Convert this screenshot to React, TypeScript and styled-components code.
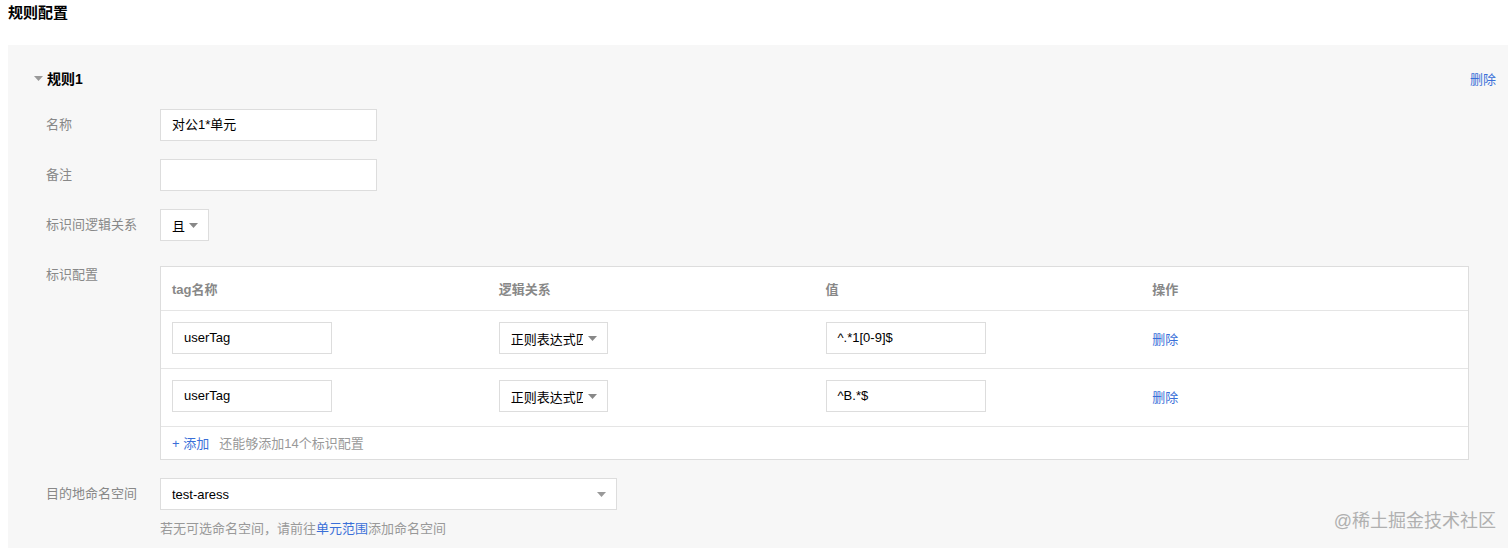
import React from 'react';
import styled, { createGlobalStyle } from 'styled-components';

const blue = '#3a6fd8';
const font = '"Liberation Sans", "Noto Sans CJK SC", sans-serif';

const GlobalStyle = createGlobalStyle`
    html, body {
        margin: 0;
        padding: 0;
        background: #ffffff;
        font-family: ${font};
        font-size: 13px;
        color: #333;
    }
`;

type TagRow = Readonly<{
    name: string;
    relation: string;
    value: string;
}>;

const rows: ReadonlyArray<TagRow> = [
    { name: 'userTag', relation: '正则表达式匹配', value: '^.*1[0-9]$' },
    { name: 'userTag', relation: '正则表达式匹配', value: '^B.*$' },
];

const Caret = ({ color = '#888' }: Readonly<{ color?: string }>) => (
    <svg width="9" height="5" viewBox="0 0 9 5">
        <path d="M0 0 L9 0 L4.5 5 Z" fill={color} />
    </svg>
);

const App = () => (
    <Page>
        <GlobalStyle />
        <PageTitle>规则配置</PageTitle>
        <Panel>
            <RuleHeader>
                <RuleTitle>
                    <Caret color="#999" />
                    规则1
                </RuleTitle>
                <LinkText>删除</LinkText>
            </RuleHeader>
            <Form>
                <FormRow>
                    <Label>名称</Label>
                    <TextInput width={217}>对公1*单元</TextInput>
                </FormRow>
                <FormRow>
                    <Label>备注</Label>
                    <TextInput width={217} />
                </FormRow>
                <FormRow gapAfter={25}>
                    <Label>标识间逻辑关系</Label>
                    <Select width={49}>
                        <SelectText>且</SelectText>
                        <Caret />
                    </Select>
                </FormRow>
                <FormRow>
                    <Label compact>标识配置</Label>
                    <Table>
                        <HeadRow>
                            <Cell>tag名称</Cell>
                            <Cell>逻辑关系</Cell>
                            <Cell>值</Cell>
                            <Cell>操作</Cell>
                        </HeadRow>
                        {rows.map((row, index) => (
                            <BodyRow key={index}>
                                <Cell>
                                    <TextInput width={160}>{row.name}</TextInput>
                                </Cell>
                                <Cell>
                                    <Select width={109}>
                                        <SelectText clip={72}>{row.relation}</SelectText>
                                        <Caret />
                                    </Select>
                                </Cell>
                                <Cell>
                                    <TextInput width={160}>{row.value}</TextInput>
                                </Cell>
                                <Cell>
                                    <LinkText>删除</LinkText>
                                </Cell>
                            </BodyRow>
                        ))}
                        <AddRow>
                            <LinkText>+ 添加</LinkText>
                            <Muted>还能够添加14个标识配置</Muted>
                        </AddRow>
                    </Table>
                </FormRow>
                <FormRow>
                    <Label>目的地命名空间</Label>
                    <Field>
                        <Select width={457}>
                            <SelectText>test-aress</SelectText>
                            <Caret color="#999" />
                        </Select>
                        <Hint>
                            若无可选命名空间，请前往<LinkText>单元范围</LinkText>添加命名空间
                        </Hint>
                    </Field>
                </FormRow>
            </Form>
            <Watermark>@稀土掘金技术社区</Watermark>
        </Panel>
    </Page>
);

const Page = styled.div`
    height: 548px;
    overflow: hidden;
    padding: 0 4px 0 8px;
    box-sizing: border-box;
`;

const PageTitle = styled.h1`
    margin: 0;
    padding-top: 4px;
    height: 45px;
    box-sizing: border-box;
    font-size: 15px;
    line-height: 18px;
    font-weight: bold;
    color: #000;
`;

const Panel = styled.div`
    position: relative;
    background: #f7f7f7;
    padding: 22px 12px 0 26px;
    height: 503px;
    box-sizing: border-box;
`;

const RuleHeader = styled.div`
    display: flex;
    align-items: center;
    justify-content: space-between;
    height: 22px;
    margin-bottom: 20px;
`;

const RuleTitle = styled.div`
    display: flex;
    align-items: center;
    gap: 4px;
    font-size: 14px;
    font-weight: bold;
    color: #000;
`;

const LinkText = styled.span`
    color: ${blue};
    cursor: pointer;
`;

const Form = styled.div`
    display: flex;
    flex-direction: column;
    padding-left: 12px;
`;

const FormRow = styled.div<{ gapAfter?: number }>`
    display: flex;
    align-items: flex-start;
    margin-bottom: ${({ gapAfter }) => gapAfter ?? 18}px;
`;

const Label = styled.div<{ compact?: boolean }>`
    width: 114px;
    flex-shrink: 0;
    color: #888;
    line-height: ${({ compact }) => (compact ? '18px' : '32px')};
`;

const TextInput = styled.div<{ width: number }>`
    width: ${({ width }) => width}px;
    height: 32px;
    box-sizing: border-box;
    border: 1px solid #dddddd;
    background: #fff;
    padding: 0 11px;
    line-height: 30px;
    color: #000;
`;

const Select = styled.div<{ width: number }>`
    width: ${({ width }) => width}px;
    height: 32px;
    box-sizing: border-box;
    border: 1px solid #dddddd;
    background: #fff;
    padding: 0 10px 0 11px;
    display: flex;
    align-items: center;
    justify-content: space-between;
    color: #000;
`;

const SelectText = styled.span<{ clip?: number }>`
    white-space: nowrap;
    overflow: hidden;
    ${({ clip }) => (clip ? `width: ${clip}px;` : '')}
`;

const Table = styled.div`
    flex: 1;
    max-width: 1309px;
    border: 1px solid #dddddd;
    background: #fff;
    box-sizing: border-box;
`;

const HeadRow = styled.div`
    display: grid;
    grid-template-columns: repeat(4, 1fr);
    height: 43px;
    align-items: center;
    border-bottom: 1px solid #e5e5e5;
    color: #888;
    font-weight: bold;
`;

const BodyRow = styled.div`
    display: grid;
    grid-template-columns: repeat(4, 1fr);
    height: 58px;
    box-sizing: border-box;
    padding-bottom: 3px;
    align-items: center;
    border-bottom: 1px solid #e5e5e5;
`;

const Cell = styled.div`
    padding: 0 11px;
    display: flex;
    align-items: center;
`;

const AddRow = styled.div`
    display: flex;
    align-items: center;
    gap: 10px;
    height: 32px;
    box-sizing: border-box;
    padding: 0 11px 2px;
`;

const Muted = styled.span`
    color: #999;
`;

const Field = styled.div`
    display: flex;
    flex-direction: column;
    gap: 10px;
`;

const Hint = styled.div`
    color: #999;
    line-height: 18px;
`;

const Watermark = styled.div`
    position: absolute;
    right: 12px;
    bottom: 14px;
    font-size: 18px;
    line-height: 26px;
    color: #b0b0b0;
`;

export default App;
